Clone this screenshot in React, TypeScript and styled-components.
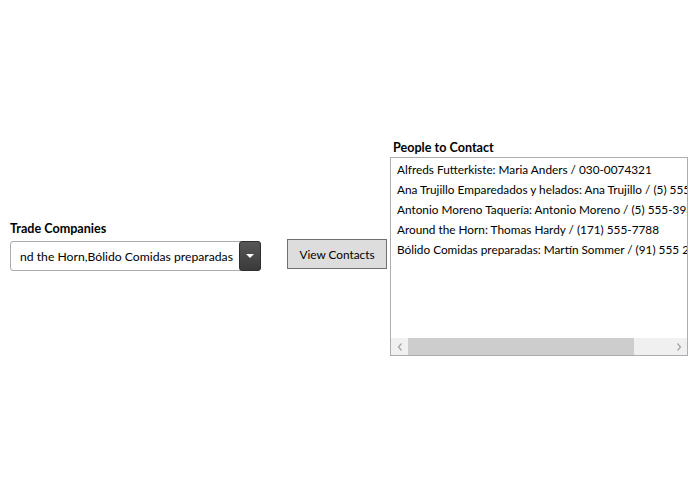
import React from "react";
import styled, { createGlobalStyle } from "styled-components";

const Global = createGlobalStyle`
  html, body { margin: 0; padding: 0; background: #fff; }
  body { font-family: Lato, "Segoe UI", "Open Sans", sans-serif; font-size: 11.8px; color: #000; }
`;

const Page = styled.div`
  width: 700px;
  height: 500px;
  display: flex;
  align-items: flex-start;
  padding-left: 10px;
  box-sizing: border-box;
  overflow: hidden;
`;

const Column = styled.div<{ $top: number; $width: number }>`
  display: flex;
  flex-direction: column;
  margin-top: ${(p) => p.$top}px;
  width: ${(p) => p.$width}px;
  flex-shrink: 0;
`;

const Label = styled.div<{ $gap: number; $indent?: number }>`
  font-weight: 700;
  font-size: 12.6px;
  line-height: 16px;
  height: 16px;
  margin-bottom: ${(p) => p.$gap}px;
  padding-left: ${(p) => p.$indent ?? 0}px;
  white-space: nowrap;
`;

const Combo = styled.div`
  display: flex;
  align-items: stretch;
  height: 30px;
  box-sizing: border-box;
  border: 1px solid #acacac;
  border-radius: 3px;
  background: #fff;
`;

const ComboText = styled.div`
  flex: 1;
  min-width: 0;
  display: flex;
  align-items: center;
  white-space: nowrap;
  padding-left: 9px;
  font-size: 12.2px;
`;

const ComboButton = styled.div`
  width: 22px;
  margin: -1px -1px -1px 0;
  border-radius: 3px;
  background: linear-gradient(#575757, #3a3a3a);
  border: 1px solid #2e2e2e;
  box-sizing: border-box;
  display: flex;
  align-items: center;
  justify-content: center;
`;

const Arrow = styled.div`
  width: 0;
  height: 0;
  border-left: 4px solid transparent;
  border-right: 4px solid transparent;
  border-top: 4px solid #fff;
`;

const Button = styled.button`
  margin-top: 239px;
  margin-left: 26px;
  margin-right: 3px;
  width: 100px;
  height: 30px;
  flex-shrink: 0;
  box-sizing: border-box;
  border: 1px solid #707070;
  background: #dddddd;
  font-family: inherit;
  font-size: 11.8px;
  color: #000;
  padding: 0;
`;

const ListBox = styled.div`
  height: 199px;
  box-sizing: border-box;
  border: 1px solid #abadb3;
  display: flex;
  flex-direction: column;
  background: #fff;
  overflow: hidden;
`;

const Items = styled.div`
  flex: 1;
  padding-top: 2px;
  overflow: hidden;
`;

const Item = styled.div`
  height: 20px;
  line-height: 20px;
  padding-left: 6px;
  white-space: nowrap;
  font-size: 11.8px;
`;

const HScroll = styled.div`
  height: 17px;
  display: flex;
  background: #f0f0f0;
  flex-shrink: 0;
`;

const ScrollArrow = styled.div`
  width: 17px;
  display: flex;
  align-items: center;
  justify-content: center;
`;

const Track = styled.div`
  flex: 1;
  display: flex;
`;

const Thumb = styled.div`
  width: 226px;
  background: #cdcdcd;
`;

const comboVisible = "nd the Horn,Bólido Comidas preparadas";

const contacts = [
  "Alfreds Futterkiste: Maria Anders / 030-0074321",
  "Ana Trujillo Emparedados y helados: Ana Trujillo / (5) 555-4729",
  "Antonio Moreno Taquería: Antonio Moreno / (5) 555-3932",
  "Around the Horn: Thomas Hardy / (171) 555-7788",
  "Bólido Comidas preparadas: Martín Sommer / (91) 555 22 82",
];

const Chevron = ({ dir }: { dir: "l" | "r" }) => (
  <svg width="6" height="8" viewBox="0 0 6 8">
    <path
      d={dir === "l" ? "M4.5 0.5 L1.5 4 L4.5 7.5" : "M1.5 0.5 L4.5 4 L1.5 7.5"}
      fill="none"
      stroke="#a3a3a3"
      strokeWidth="1.2"
    />
  </svg>
);

export default function App() {
  return (
    <>
      <Global />
      <Page>
        <Column $top={221} $width={251}>
          <Label $gap={4}>Trade Companies</Label>
          <Combo>
            <ComboText>{comboVisible}</ComboText>
            <ComboButton>
              <Arrow />
            </ComboButton>
          </Combo>
        </Column>
        <Button>View Contacts</Button>
        <Column $top={140} $width={298}>
          <Label $gap={1} $indent={3}>People to Contact</Label>
          <ListBox>
            <Items>
              {contacts.map((c) => (
                <Item key={c}>{c}</Item>
              ))}
            </Items>
            <HScroll>
              <ScrollArrow>
                <Chevron dir="l" />
              </ScrollArrow>
              <Track>
                <Thumb />
              </Track>
              <ScrollArrow>
                <Chevron dir="r" />
              </ScrollArrow>
            </HScroll>
          </ListBox>
        </Column>
      </Page>
    </>
  );
}
